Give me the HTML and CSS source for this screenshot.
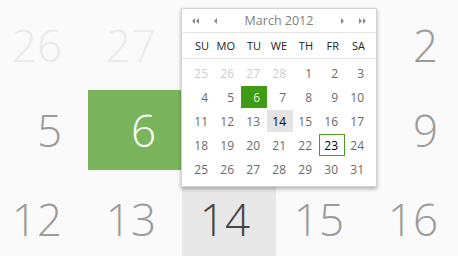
FILE: index.html
```html
<html>
<head>
<title>calendar</title>
<link rel="stylesheet" href="styles.css">
</head>
<body>

<div class="month">
<div class="day other">26</div>
<div class="day other">27</div>
<div class="day other"></div>
<div class="day"></div>
<div class="day">2</div>
<div class="day">5</div>
<div class="day selected">6</div>
<div class="day"></div>
<div class="day"></div>
<div class="day">9</div>
<div class="day">12</div>
<div class="day">13</div>
<div class="day hover">14</div>
<div class="day">15</div>
<div class="day">16</div>
</div>

<div class="popup">
<div class="head">
<a class="nav" href="#"><svg width="8" height="6" viewBox="0 0 8 6"><path d="M3 0 L0 3 L3 6 Z M7 0 L4 3 L7 6 Z"/></svg></a>
<a class="nav" href="#"><svg width="4" height="6" viewBox="0 0 4 6"><path d="M3 0 L0 3 L3 6 Z"/></svg></a>
<span class="title">March 2012</span>
<a class="nav" href="#"><svg width="4" height="6" viewBox="0 0 4 6"><path d="M1 0 L4 3 L1 6 Z"/></svg></a>
<a class="nav" href="#"><svg width="8" height="6" viewBox="0 0 8 6"><path d="M1 0 L4 3 L1 6 Z M5 0 L8 3 L5 6 Z"/></svg></a>
</div>
<div class="names">
<span>SU</span><span>MO</span><span>TU</span><span>WE</span><span>TH</span><span>FR</span><span>SA</span>
</div>
<div class="grid">
<span class="other">25</span><span class="other">26</span><span class="other">27</span><span class="other">28</span><span>1</span><span>2</span><span>3</span>
<span>4</span><span>5</span><span class="sel">6</span><span>7</span><span>8</span><span>9</span><span>10</span>
<span>11</span><span>12</span><span>13</span><span class="hov">14</span><span>15</span><span>16</span><span>17</span>
<span>18</span><span>19</span><span>20</span><span>21</span><span>22</span><span class="focus">23</span><span>24</span>
<span>25</span><span>26</span><span>27</span><span>28</span><span>29</span><span>30</span><span>31</span>
</div>
</div>

</body>
</html>
```

FILE: styles.css
```css
body {
	font-family: "Open Sans", "Noto Sans", sans-serif;
	background: #fafafa;
	margin: 0;
	padding: 0;
	width: 458px;
	height: 256px;
	overflow: hidden;
	position: relative;
}
.month {
	display: grid;
	grid-template-columns: repeat(5, 94px);
	grid-template-rows: 90px 80px 98px;
	margin-left: -6px;
}
.day {
	display: flex;
	align-items: center;
	justify-content: flex-end;
	padding-right: 26px;
	font-size: 44px;
	font-weight: 300;
	color: #9b9b9b;
}
.day.other {
	color: #ebebeb;
}
.day.selected {
	background: #7ab55d;
	color: #fff;
}
.day.hover {
	background: #e8e8e8;
	color: #444;
}
.popup {
	position: absolute;
	left: 181px;
	top: 8px;
	width: 194px;
	height: 177px;
	background: #fff;
	border: 1px solid #d4d4d4;
	box-shadow: 0 2px 4px rgba(0, 0, 0, 0.3);
}
.head {
	display: flex;
	align-items: center;
	height: 23px;
	padding: 0 4px;
	border-bottom: 1px solid #e4e4e4;
}
.nav {
	width: 20px;
	display: flex;
	justify-content: center;
}
.nav svg {
	fill: #8a8a8a;
}
.title {
	flex: 1;
	text-align: center;
	font-size: 12.5px;
	color: #808080;
}
.names {
	display: grid;
	grid-template-columns: repeat(7, 26px);
	height: 25px;
	align-items: center;
	padding: 0 6px 0 7px;
	border-bottom: 1px solid #e4e4e4;
	font-size: 11px;
	color: #222;
}
.names span {
	text-align: right;
	padding-right: 6px;
}
.grid {
	display: grid;
	grid-template-columns: repeat(7, 26px);
	grid-auto-rows: 22px;
	row-gap: 2px;
	padding: 3px 6px 0 7px;
	font-size: 12px;
	color: #6a6a6a;
}
.grid span {
	display: flex;
	align-items: center;
	justify-content: flex-end;
	padding-right: 7px;
}
.grid .other {
	color: #cdcdcd;
}
.grid .sel {
	background: #3f9a14;
	color: #e6f5dc;
}
.grid .hov {
	background: #e4e4e4;
	color: #000;
}
.grid .focus {
	box-shadow: inset 0 0 0 1px #4c9c22;
	color: #000;
}
```
